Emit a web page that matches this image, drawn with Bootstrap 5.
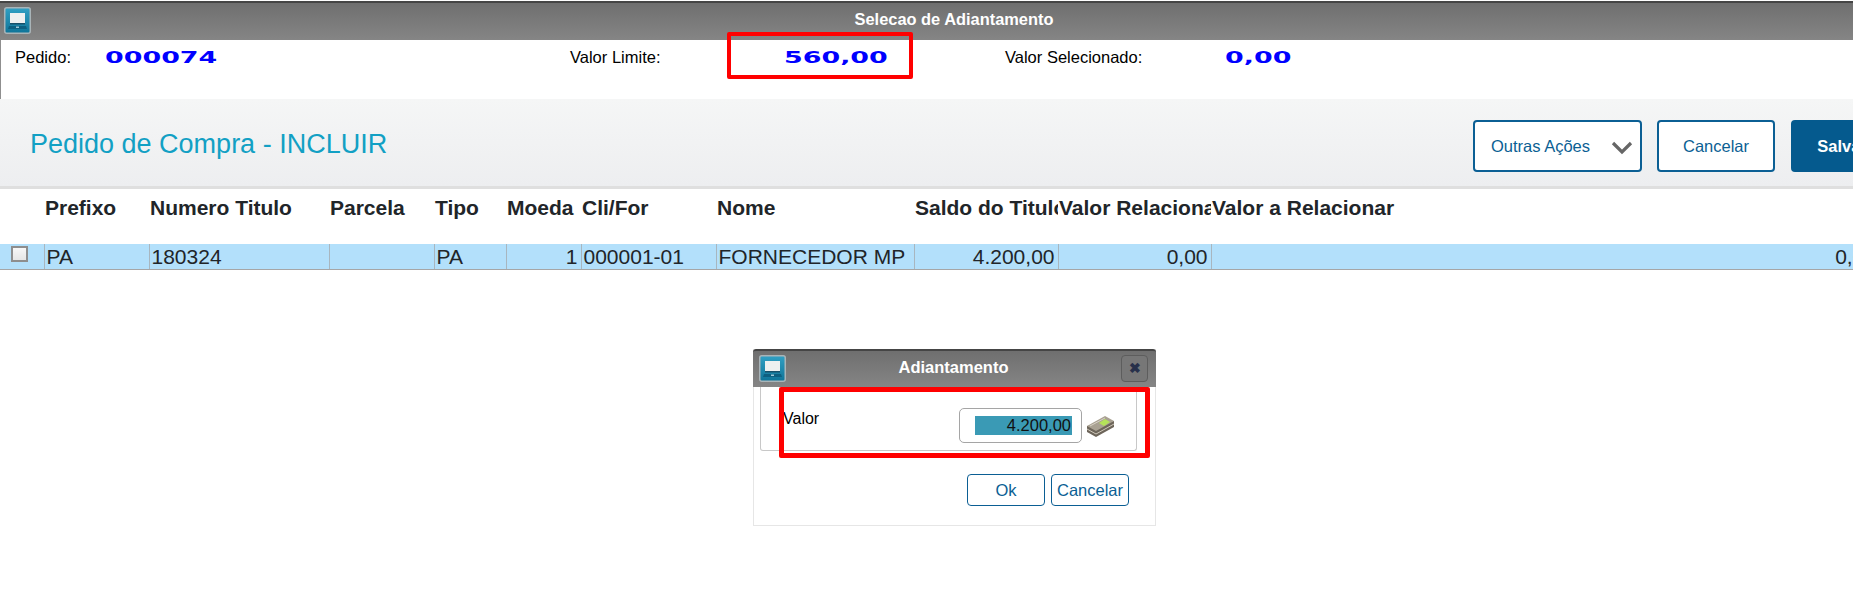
<!DOCTYPE html>
<html lang="pt-BR">
<head>
    <meta charset="UTF-8">
    <meta name="viewport" content="width=device-width, initial-scale=1.0">
    <title>Selecao de Adiantamento</title>
    <link href="https://cdn.jsdelivr.net/npm/bootstrap@5.3.0/dist/css/bootstrap.min.css" rel="stylesheet">
    <style>
        html, body {
            height: 609px;
            overflow: hidden;
        }

        body {
            background-color: #fff;
            color: #000;
            font-family: "Liberation Sans", Arial, sans-serif;
            position: relative;
        }

        /* window title bars */
        .win-bar {
            background: linear-gradient(#6f6f6f, #858585);
            color: #fff;
            font-weight: 700;
        }

        .top-bar {
            height: 39px;
            margin-top: 1px;
            border-top: 2px solid #454545;
            padding-left: 4px;
            font-size: 16.4px;
        }

        .bar-title {
            text-align: center;
            flex: 1 1 auto;
        }

        .top-title {
            padding: 4px 2px 0 26px;
        }

        .app-icon {
            width: 27px;
            height: 27px;
            flex: none;
        }

        /* selection summary */
        .info-strip {
            height: 59px;
            border-left: 1px solid #8f8f8f;
            padding: 5px 0 0 14px;
            display: grid;
            grid-template-columns: 90px 465px 214px 221px 220px 1fr;
            font-size: 16.5px;
            align-items: start;
            position: relative;
        }

        .wide-val {
            display: inline-block;
            font-family: "DejaVu Sans", sans-serif;
            font-weight: 700;
            font-size: 16.5px;
            line-height: 18px;
            color: #0000ff;
            transform: scaleX(1.63);
            transform-origin: left center;
        }

        .mark-red {
            position: absolute;
            border: 4px solid #ff0000;
            border-radius: 2px;
            pointer-events: none;
        }

        .mark-limit {
            left: 726px;
            top: -8px;
            width: 186px;
            height: 47px;
        }

        /* page heading */
        .head-panel {
            height: 90px;
            background: linear-gradient(#f5f6f6, #edeef0);
            border-bottom: 3px solid #dfdfdf;
            padding: 23px 0 0 30px;
        }

        .page-title {
            color: #12a0c4;
            font-size: 27px;
            font-weight: 400;
            line-height: 44px;
            margin: 0;
            white-space: nowrap;
        }

        .btn-totvs {
            height: 52px;
            border: 2px solid #0b5f94;
            border-radius: 4px;
            background-color: #fff;
            color: #0b5f94;
            font-size: 16.5px;
            padding: 0;
            flex: none;
        }

        .btn-more {
            width: 169px;
            text-align: left;
            padding-left: 16px;
            padding-right: 7px;
        }

        .btn-cancel {
            width: 118px;
            margin-left: 15px;
        }

        .btn-save {
            width: 102px;
            margin-left: 16px;
            background-color: #055a8e;
            border-color: #055a8e;
            color: #fff;
            font-weight: 700;
        }

        .action-row {
            position: absolute;
            left: 1473px;
            top: 120px;
            width: 440px;
        }

        /* browse grid */
        .grid-wrap {
            width: 1879px;
        }

        .browse {
            table-layout: fixed;
            width: 1879px;
            margin: 0;
            --bs-table-bg: transparent;
        }

        .browse th, .browse td {
            overflow: hidden;
            white-space: nowrap;
        }

        .browse th {
            height: 55px;
            padding: 6px 0 0 1px;
            font-size: 21px;
            line-height: 26px;
            vertical-align: top;
            border: 0;
        }

        .browse td {
            height: 25px;
            padding: 1px 3px 0 2px;
            font-size: 21px;
            line-height: 24px;
            background-color: #b3e0fb;
            border: 0;
            border-bottom: 1px solid #a6a6a6;
            border-right: 1px solid #a8b6bf;
        }

        .browse td:last-child {
            border-right: 0;
        }

        .check-box {
            display: block;
            width: 17px;
            height: 16px;
            margin: 1px 0 0 9px;
            border: 2px solid #8e8e8e;
            background: linear-gradient(#f7f7f7, #e6e6e6);
        }

        /* dialog */
        .dlg {
            position: absolute;
            left: 753px;
            top: 349px;
            width: 403px;
            height: 177px;
            background-color: #fff;
            border: 1px solid #e6e6e6;
            border-top: 0;
        }

        .dlg-bar {
            height: 38px;
            margin: 0 -1px;
            border-top: 2px solid #454545;
            border-radius: 3px 3px 0 0;
            padding: 4px 8px 0 6px;
            font-size: 16.5px;
        }

        .close-x {
            width: 27px;
            height: 27px;
            flex: none;
            border: 1px solid #5d5d5d;
            border-radius: 4px;
            background-color: #777;
            color: #27304a;
            font-size: 14px;
            line-height: 25px;
            text-align: center;
        }

        .dlg-field {
            height: 64px;
            margin: 0 18px 0 6px;
            border: 1px solid #c8c8c8;
            border-top: 0;
            border-radius: 0 0 3px 3px;
            padding: 20px 0 0 22px;
            font-size: 16px;
            position: relative;
        }

        .val-label {
            width: 176px;
            line-height: 24px;
        }

        .val-input {
            width: 123px;
            height: 35px;
            margin-top: 1px;
            border: 1px solid #a5a5a5;
            border-radius: 5px;
            padding: 7px 9px 0 0;
            text-align: right;
        }

        .val-sel {
            display: inline-block;
            width: 97px;
            height: 19px;
            background-color: #3a9ab5;
            color: #111;
            font-size: 16.5px;
            line-height: 19px;
            padding-right: 1px;
            vertical-align: top;
        }

        .money-icon {
            width: 29px;
            height: 22px;
            margin: 8px 0 0 4px;
            flex: none;
        }

        .mark-valor {
            left: 25px;
            top: 38px;
            width: 371px;
            height: 71px;
            border-width: 5px;
        }

        .dlg-actions {
            margin: 23px 26px 0 0;
        }

        .btn-dlg {
            width: 78px;
            height: 32px;
            border-width: 1.5px;
            font-size: 16.5px;
            line-height: 26px;
            margin-left: 6px;
            padding: 0;
        }
    </style>
</head>
<body>
<svg width="0" height="0" class="d-block">
    <defs>
        <linearGradient id="tile" x1="0" y1="0" x2="0" y2="1">
            <stop offset="0" stop-color="#31a0c4"/>
            <stop offset="1" stop-color="#0f7498"/>
        </linearGradient>
        <symbol id="app" viewBox="0 0 27 27">
            <rect x=".75" y=".75" width="25.5" height="25.5" rx="2" fill="url(#tile)" stroke="#a9b4b8" stroke-width="1.5"/>
            <rect x="6" y="6" width="15" height="10" fill="#eef0f0"/>
            <rect x="6" y="16" width="15" height="1.5" fill="#16506a"/>
            <path d="M5 19h17l1 3H4z" fill="#0d5f80"/>
            <rect x="12" y="19.5" width="3" height="1.5" fill="#9cc8d8"/>
        </symbol>
    </defs>
</svg>

<div class="win-bar top-bar d-flex align-items-start">
    <svg class="app-icon mt-1"><use href="#app"/></svg>
    <div class="bar-title top-title">Selecao de Adiantamento</div>
</div>

<div class="info-strip">
    <span>Pedido:</span>
    <span><span class="wide-val">000074</span></span>
    <span>Valor Limite:</span>
    <span><span class="wide-val">560,00</span></span>
    <span>Valor Selecionado:</span>
    <span><span class="wide-val">0,00</span></span>
    <div class="mark-red mark-limit"></div>
</div>

<div class="head-panel">
    <h1 class="page-title">Pedido de Compra - INCLUIR</h1>
</div>
<div class="action-row d-flex">
    <button type="button" class="btn btn-totvs btn-more d-flex align-items-center justify-content-between">
        <span>Outras Ações</span>
        <svg width="22" height="14" viewBox="0 0 22 14" class="mt-1"><path d="M2 2l9 9 9-9" fill="none" stroke="#666" stroke-width="3.2"/></svg>
    </button>
    <button type="button" class="btn btn-totvs btn-cancel">Cancelar</button>
    <button type="button" class="btn btn-totvs btn-save">Salvar</button>
</div>

<div class="grid-wrap">
    <table class="table browse">
        <colgroup>
            <col style="width:44px"><col style="width:105px"><col style="width:180px"><col style="width:105px">
            <col style="width:72px"><col style="width:75px"><col style="width:135px"><col style="width:198px">
            <col style="width:144px"><col style="width:153px"><col>
        </colgroup>
        <thead>
        <tr>
            <th></th>
            <th>Prefixo</th>
            <th>Numero Titulo</th>
            <th>Parcela</th>
            <th>Tipo</th>
            <th>Moeda</th>
            <th>Cli/For</th>
            <th>Nome</th>
            <th>Saldo do Titulo</th>
            <th>Valor Relacionado</th>
            <th>Valor a Relacionar</th>
        </tr>
        </thead>
        <tbody>
        <tr>
            <td><span class="check-box"></span></td>
            <td>PA</td>
            <td>180324</td>
            <td></td>
            <td>PA</td>
            <td class="text-end">1</td>
            <td>000001-01</td>
            <td>FORNECEDOR MP</td>
            <td class="text-end">4.200,00</td>
            <td class="text-end">0,00</td>
            <td class="text-end">0,00</td>
        </tr>
        </tbody>
    </table>
</div>

<div class="dlg">
    <div class="win-bar dlg-bar d-flex align-items-start">
        <svg class="app-icon"><use href="#app"/></svg>
        <div class="bar-title">Adiantamento</div>
        <div class="close-x">&#10006;</div>
    </div>
    <div class="dlg-field d-flex">
        <div class="val-label">Valor</div>
        <div class="val-input"><span class="val-sel">4.200,00</span></div>
        <svg class="money-icon" viewBox="0 0 29 22">
            <path d="M1 11v6l9 5 18-10V6z" fill="#6d655a"/>
            <path d="M1 14l9 5 18-10" fill="none" stroke="#cfc8ba" stroke-width="1"/>
            <path d="M1 11L19 1l9 5-18 10z" fill="#a9a192"/>
            <path d="M13 8l6-4 5 3-6 4z" fill="#b4e25a"/>
            <path d="M4 11l15-8" fill="none" stroke="#d8d2c6" stroke-width="1"/>
        </svg>
    </div>
    <div class="dlg-actions d-flex justify-content-end">
        <button type="button" class="btn btn-totvs btn-dlg">Ok</button>
        <button type="button" class="btn btn-totvs btn-dlg">Cancelar</button>
    </div>
    <div class="mark-red mark-valor"></div>
</div>

<script src="https://cdn.jsdelivr.net/npm/bootstrap@5.3.0/dist/js/bootstrap.bundle.min.js"></script>
</body>
</html>
